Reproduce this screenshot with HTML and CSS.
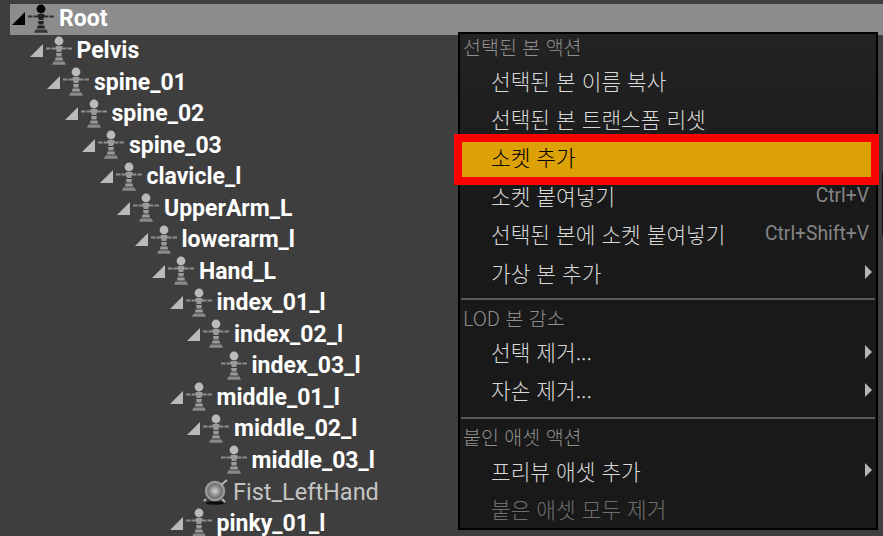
FILE: index.html
```html
<!DOCTYPE html>
<html lang="ko">
<head>
  <meta charset="UTF-8" />
  <title>Skeleton Tree</title>
  <meta name="viewport" content="width=device-width, initial-scale=1.0" />
  <link rel="stylesheet" href="styles.css">
</head>
<body>
  <svg class="defs" width="0" height="0">
    <defs>
      <filter id="soft"><feGaussianBlur stdDeviation="0.65" /></filter>
      <radialGradient id="socketGlow">
        <stop offset="0" stop-color="#d0d0d0" />
        <stop offset="0.45" stop-color="#9a9a9a" />
        <stop offset="1" stop-color="#555" />
      </radialGradient>
      <symbol id="bone" viewBox="0 0 28 30">
        <g filter="url(#soft)">
          <circle cx="14" cy="5" r="4.400" fill="currentColor" />
          <path d="M1 12.500h4.500M6.500 12.500h5M16.500 12.500h5M22.500 12.500h4.500" stroke="currentColor" stroke-width="2.200" opacity=".65" fill="none" />
          <path d="M10.500 10h7l-1.200 6h-4.600zM11 17h6l-.7 3.500h-4.600zM10.500 21.500h7l.5 3h-8z" fill="currentColor" opacity=".75" />
          <path d="M8.500 25.500h11l1.500 3.200h-14z" fill="currentColor" opacity=".6" />
        </g>
      </symbol>
      <symbol id="socket" viewBox="0 0 26 26">
        <g filter="url(#soft)">
          <ellipse cx="12" cy="24" rx="9" ry="1.800" fill="#0c0c0c" />
          <circle cx="12" cy="12" r="9" fill="url(#socketGlow)" stroke="#999" stroke-width="2.500" />
          <path d="M18 6l6-5M3 20l-2 2M19 20l3 3" stroke="#b5b5b5" stroke-width="2" />
        </g>
      </symbol>
    </defs>
  </svg>

  <div class="tree-row selected">
    <span class="expander"></span><svg class="bone"><use href="#bone" /></svg><span class="name">Root</span>
  </div>
  <ul class="tree">
    <li><div class="tree-row"><span class="expander"></span><svg class="bone"><use href="#bone" /></svg><span class="name">Pelvis</span></div>
    <ul class="tree">
      <li><div class="tree-row"><span class="expander"></span><svg class="bone"><use href="#bone" /></svg><span class="name">spine_01</span></div>
      <ul class="tree">
        <li><div class="tree-row"><span class="expander"></span><svg class="bone"><use href="#bone" /></svg><span class="name">spine_02</span></div>
        <ul class="tree">
          <li><div class="tree-row"><span class="expander"></span><svg class="bone"><use href="#bone" /></svg><span class="name">spine_03</span></div>
          <ul class="tree">
            <li><div class="tree-row"><span class="expander"></span><svg class="bone"><use href="#bone" /></svg><span class="name">clavicle_l</span></div>
            <ul class="tree">
              <li><div class="tree-row"><span class="expander"></span><svg class="bone"><use href="#bone" /></svg><span class="name">UpperArm_L</span></div>
              <ul class="tree">
                <li><div class="tree-row"><span class="expander"></span><svg class="bone"><use href="#bone" /></svg><span class="name">lowerarm_l</span></div>
                <ul class="tree">
                  <li><div class="tree-row"><span class="expander"></span><svg class="bone"><use href="#bone" /></svg><span class="name">Hand_L</span></div>
                  <ul class="tree">
                    <li><div class="tree-row"><span class="expander"></span><svg class="bone"><use href="#bone" /></svg><span class="name">index_01_l</span></div>
                    <ul class="tree">
                      <li><div class="tree-row"><span class="expander"></span><svg class="bone"><use href="#bone" /></svg><span class="name">index_02_l</span></div>
                      <ul class="tree">
                        <li><div class="tree-row"><span class="expander none"></span><svg class="bone"><use href="#bone" /></svg><span class="name">index_03_l</span></div></li>
                      </ul></li>
                    </ul></li>
                    <li><div class="tree-row"><span class="expander"></span><svg class="bone"><use href="#bone" /></svg><span class="name">middle_01_l</span></div>
                    <ul class="tree">
                      <li><div class="tree-row"><span class="expander"></span><svg class="bone"><use href="#bone" /></svg><span class="name">middle_02_l</span></div>
                      <ul class="tree">
                        <li><div class="tree-row"><span class="expander none"></span><svg class="bone"><use href="#bone" /></svg><span class="name">middle_03_l</span></div></li>
                      </ul></li>
                      <li><div class="tree-row socket-row"><span class="expander none"></span><svg class="socket"><use href="#socket" /></svg><span class="name">Fist_LeftHand</span></div></li>
                    </ul></li>
                    <li><div class="tree-row"><span class="expander"></span><svg class="bone"><use href="#bone" /></svg><span class="name">pinky_01_l</span></div></li>
                  </ul></li>
                </ul></li>
              </ul></li>
            </ul></li>
          </ul></li>
        </ul></li>
      </ul></li>
    </ul></li>
  </ul>

  <div class="scroll-edge"></div>

  <div class="menu">
    <div class="menu-head">선택된 본 액션</div>
    <div class="menu-item">선택된 본 이름 복사</div>
    <div class="menu-item">선택된 본 트랜스폼 리셋</div>
    <div class="menu-item active">소켓 추가</div>
    <div class="menu-item">소켓 붙여넣기<span class="key">Ctrl+V</span></div>
    <div class="menu-item">선택된 본에 소켓 붙여넣기<span class="key">Ctrl+Shift+V</span></div>
    <div class="menu-item">가상 본 추가<span class="arrow"></span></div>
    <div class="menu-sep"></div>
    <div class="menu-head">LOD 본 감소</div>
    <div class="menu-item">선택 제거...<span class="arrow"></span></div>
    <div class="menu-item">자손 제거...<span class="arrow"></span></div>
    <div class="menu-sep last"></div>
    <div class="menu-head">붙인 애셋 액션</div>
    <div class="menu-item">프리뷰 애셋 추가<span class="arrow"></span></div>
    <div class="menu-item disabled">붙은 애셋 모두 제거</div>
  </div>
</body>
</html>
```

FILE: styles.css
```css
html, body {
  height: 100%;
}

body {
  margin: 0;
  padding: 4px 0 0 10px;
  box-sizing: border-box;
  overflow: hidden;
  position: relative;
  background: #3e3e3e;
  color: #fff;
  font-family: Roboto, "Noto Sans CJK KR", sans-serif;
}

.defs {
  position: absolute;
}

.tree {
  list-style: none;
  margin: 0;
  padding: 0 0 0 17.5px;
}

.tree-row {
  display: flex;
  align-items: center;
  height: 31.5px;
  font-size: 23px;
  font-weight: 700;
  color: #bababa;
}

.tree-row .name {
  color: #fff;
  margin-left: 4px;
}

.selected {
  height: 31px;
  padding-bottom: 2px;
  box-sizing: border-box;
  background: #8c8c8c;
  color: #000;
}

.expander {
  width: 0;
  height: 0;
  margin-left: 2px;
  border-style: solid;
  border-width: 0 0 13px 13px;
  border-color: transparent transparent currentColor transparent;
}

.expander.none {
  border-color: transparent;
}

.bone {
  width: 28px;
  height: 30px;
  margin-left: 2px;
  flex: none;
}

.socket {
  width: 26px;
  height: 26px;
  margin-left: 3px;
  flex: none;
}

.socket-row .name {
  font-size: 23.5px;
  font-weight: 400;
  color: #c4c4c4;
}

.scroll-edge {
  position: absolute;
  right: 0;
  top: 172px;
  width: 1px;
  height: 63px;
  background: #141414;
}

.menu {
  position: absolute;
  left: 458px;
  top: 32px;
  width: 420px;
  height: 498px;
  box-sizing: border-box;
  border: 2px solid #000;
  background: linear-gradient(#232323, #191919 35%);
  font-family: "Noto Sans CJK KR", Roboto, sans-serif;
  font-weight: 300;
  font-size: 21.4px;
}

.menu-head {
  height: 27px;
  line-height: 25px;
  padding-left: 3px;
  font-size: 19.5px;
  color: #8f8f8f;
}

.menu-item {
  display: flex;
  justify-content: space-between;
  align-items: center;
  height: 38.4px;
  padding: 0 8px 0 31px;
  color: #d8d8d8;
}

.menu-item.active {
  /* red frame drawn over the menu edge */
  position: relative;
  z-index: 1;
  color: #000;
}

.menu-item.active::before {
  content: "";
  position: absolute;
  left: -6px;
  right: -3px;
  top: -4px;
  bottom: -9px;
  border: 8px solid #f00;
  background: #dca106;
  z-index: -1;
}

.menu-item.disabled {
  color: #6e6e6e;
}

.key {
  margin-right: -1px;
  font-family: Roboto, sans-serif;
  font-weight: 400;
  font-size: 19.3px;
  color: #858585;
}

.arrow {
  width: 0;
  height: 0;
  margin-right: -4px;
  border-style: solid;
  border-width: 7px 0 7px 7px;
  border-color: transparent transparent transparent #b5b5b5;
}

.menu-sep {
  height: 2px;
  margin: 7px 1px 5px;
  background: #5a5a5a;
}

.menu-sep.last {
  margin-top: 8px;
}
```
